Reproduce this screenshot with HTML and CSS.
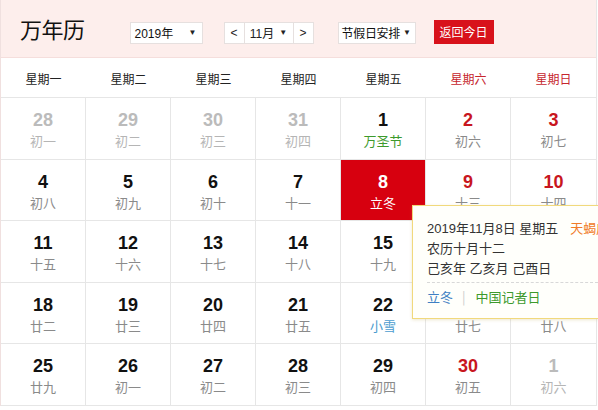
FILE: index.html
```html
<!DOCTYPE html>
<html lang="zh">
<head>
<meta charset="utf-8">
<title>万年历</title>
<link rel="stylesheet" href="styles.css">
</head>
<body>
<div class="cal">
  <div class="top">
    <div class="title">万年历</div>
    <div class="sel year"><span>2019年</span><span class="arr">▼</span></div>
    <div class="month">
      <div class="mbtn">&lt;</div>
      <div class="mcur"><span>11月</span><span class="arr">▼</span></div>
      <div class="mbtn">&gt;</div>
    </div>
    <div class="sel hol"><span>节假日安排</span><span class="arr">▼</span></div>
    <div class="today">返回今日</div>
  </div>
  <div class="grid">
    <div class="wk">星期一</div><div class="wk">星期二</div><div class="wk">星期三</div><div class="wk">星期四</div><div class="wk">星期五</div><div class="wk we">星期六</div><div class="wk we last">星期日</div>

    <div class="c off"><b>28</b><i>初一</i></div>
    <div class="c off"><b>29</b><i>初二</i></div>
    <div class="c off"><b>30</b><i>初三</i></div>
    <div class="c off"><b>31</b><i>初四</i></div>
    <div class="c"><b>1</b><i class="fest">万圣节</i></div>
    <div class="c we"><b>2</b><i>初六</i></div>
    <div class="c we last"><b>3</b><i>初七</i></div>

    <div class="c"><b>4</b><i>初八</i></div>
    <div class="c"><b>5</b><i>初九</i></div>
    <div class="c"><b>6</b><i>初十</i></div>
    <div class="c"><b>7</b><i>十一</i></div>
    <div class="c sel-day"><b>8</b><i>立冬</i></div>
    <div class="c we"><b>9</b><i>十三</i></div>
    <div class="c we last"><b>10</b><i>十四</i></div>

    <div class="c"><b>11</b><i>十五</i></div>
    <div class="c"><b>12</b><i>十六</i></div>
    <div class="c"><b>13</b><i>十七</i></div>
    <div class="c"><b>14</b><i>十八</i></div>
    <div class="c"><b>15</b><i>十九</i></div>
    <div class="c we"><b>16</b><i>二十</i></div>
    <div class="c we last"><b>17</b><i>廿一</i></div>

    <div class="c"><b>18</b><i>廿二</i></div>
    <div class="c"><b>19</b><i>廿三</i></div>
    <div class="c"><b>20</b><i>廿四</i></div>
    <div class="c"><b>21</b><i>廿五</i></div>
    <div class="c"><b>22</b><i class="term">小雪</i></div>
    <div class="c we"><b>23</b><i>廿七</i></div>
    <div class="c we last"><b>24</b><i>廿八</i></div>

    <div class="c"><b>25</b><i>廿九</i></div>
    <div class="c"><b>26</b><i>初一</i></div>
    <div class="c"><b>27</b><i>初二</i></div>
    <div class="c"><b>28</b><i>初三</i></div>
    <div class="c"><b>29</b><i>初四</i></div>
    <div class="c we"><b>30</b><i>初五</i></div>
    <div class="c off last"><b>1</b><i>初六</i></div>
  </div>
  <div class="tip">
    <div class="tl">2019年11月8日 星期五<span class="star">天蝎座</span></div>
    <div class="tl">农历十月十二</div>
    <div class="tl">己亥年 乙亥月 己酉日</div>
    <div class="tfoot"><span class="tterm">立冬</span><span class="bar">|</span><span class="tfest">中国记者日</span></div>
  </div>
</div>
</body>
</html>
```
FILE: styles.css
```css
html, body { margin: 0; padding: 0; background: #fff; overflow: hidden; }
body {
  font-family: "Liberation Sans", "Noto Sans CJK SC", sans-serif;
  color: #222;
  width: 598px;
  height: 410px;
}
.cal {
  position: relative;
  width: 597px;
  box-sizing: border-box;
  border-left: 1px solid #f0e0df;
  border-right: 1px solid #e6e6e6;
}
.top {
  height: 58px;
  box-sizing: border-box;
  background: #fdeeec;
  border-bottom: 1px solid #f5dedc;
  display: flex;
  align-items: center;
  padding: 8px 0 0 19px;
}
.title {
  font-family: "Noto Sans CJK SC", sans-serif;
  font-size: 22px;
  line-height: 26px;
  color: #111;
  margin: -10px 45px 0 0;
  letter-spacing: -0.5px;
}
.sel {
  height: 22px;
  box-sizing: border-box;
  background: #fff;
  border: 1px solid #e6e0df;
  display: flex;
  align-items: center;
  justify-content: space-between;
  font-size: 12px;
  color: #111;
  font-family: "Liberation Sans", "Noto Sans CJK SC", sans-serif;
}
.year { width: 73px; padding: 0 5px 0 4px; margin-right: 21px; }
.hol { width: 78px; padding: 0 4px 0 3px; margin-right: 18px; letter-spacing: -0.3px; }
.arr { font-size: 8px; color: #222; }
.month {
  display: flex;
  height: 22px;
  margin-right: 24px;
}
.mbtn, .mcur {
  height: 22px;
  box-sizing: border-box;
  background: #fff;
  border: 1px solid #e6e0df;
  display: flex;
  align-items: center;
  justify-content: center;
  font-size: 12px;
  color: #222;
}
.mbtn { width: 21px; }
.mcur { width: 48px; border-left: none; border-right: none; gap: 5px; }
.today {
  width: 60px;
  height: 24px;
  background: #d8121b;
  color: #fff;
  font-size: 12px;
  font-family: "Noto Sans CJK SC", sans-serif;
  display: flex;
  align-items: center;
  justify-content: center;
  margin-top: -2px;
}
.grid {
  display: grid;
  grid-template-columns: repeat(7, 1fr);
  grid-template-rows: 40px repeat(5, 61.6px);
}
.wk {
  display: flex;
  align-items: center;
  justify-content: center;
  font-size: 12px;
  font-family: "Noto Sans CJK SC", sans-serif;
  color: #222;
  border-bottom: 1px solid #e6e6e6;
  box-sizing: border-box;
  padding-top: 1px;
}
.wk.we { color: #c6262e; }
.c {
  box-sizing: border-box;
  border-right: 1px solid #e6e6e6;
  border-bottom: 1px solid #e6e6e6;
  display: flex;
  flex-direction: column;
  align-items: center;
  padding-top: 12px;
}
.c.last { border-right: none; }
.c b {
  font-size: 18px;
  line-height: 20px;
  font-weight: bold;
  color: #111;
}
.c i {
  font-style: normal;
  font-size: 13px;
  line-height: 20px;
  margin-top: 1px;
  color: #8a8a8a;
  font-family: "Noto Sans CJK SC", sans-serif;
}
.c.we b { color: #c8161e; }
.c.off b { color: #bbb; }
.c.off i { color: #b5b5b5; }
.c i.fest { color: #3d9a2c; }
.c i.term { color: #4a9ccf; }
.c.sel-day { background: #d7000f; }
.c.sel-day b, .c.sel-day i { color: #fff; }
.tip {
  position: absolute;
  left: 411px;
  top: 205px;
  width: 186px;
  height: 114px;
  box-sizing: border-box;
  background: #fffffb;
  border: 1px solid #f1d97c;
  border-right: none;
  box-shadow: 0 1px 3px rgba(200, 180, 100, 0.3);
  padding: 13px 0 0 14px;
  font-family: "Liberation Sans", "Noto Sans CJK SC", sans-serif;
  font-size: 13px;
  color: #333;
  white-space: nowrap;
  overflow: hidden;
}
.tl { line-height: 20px; }
.star { color: #f07b27; margin-left: 12px; }
.tfoot {
  margin-top: 3px;
  border-top: 1px dashed #d8d8d8;
  padding-top: 4px;
  line-height: 20px;
  font-family: "Noto Sans CJK SC", sans-serif;
}
.tterm { color: #3f7fc3; }
.bar { color: #ccc; margin: 0 10px 0 9px; }
.tfest { color: #3d9a2c; }
```
